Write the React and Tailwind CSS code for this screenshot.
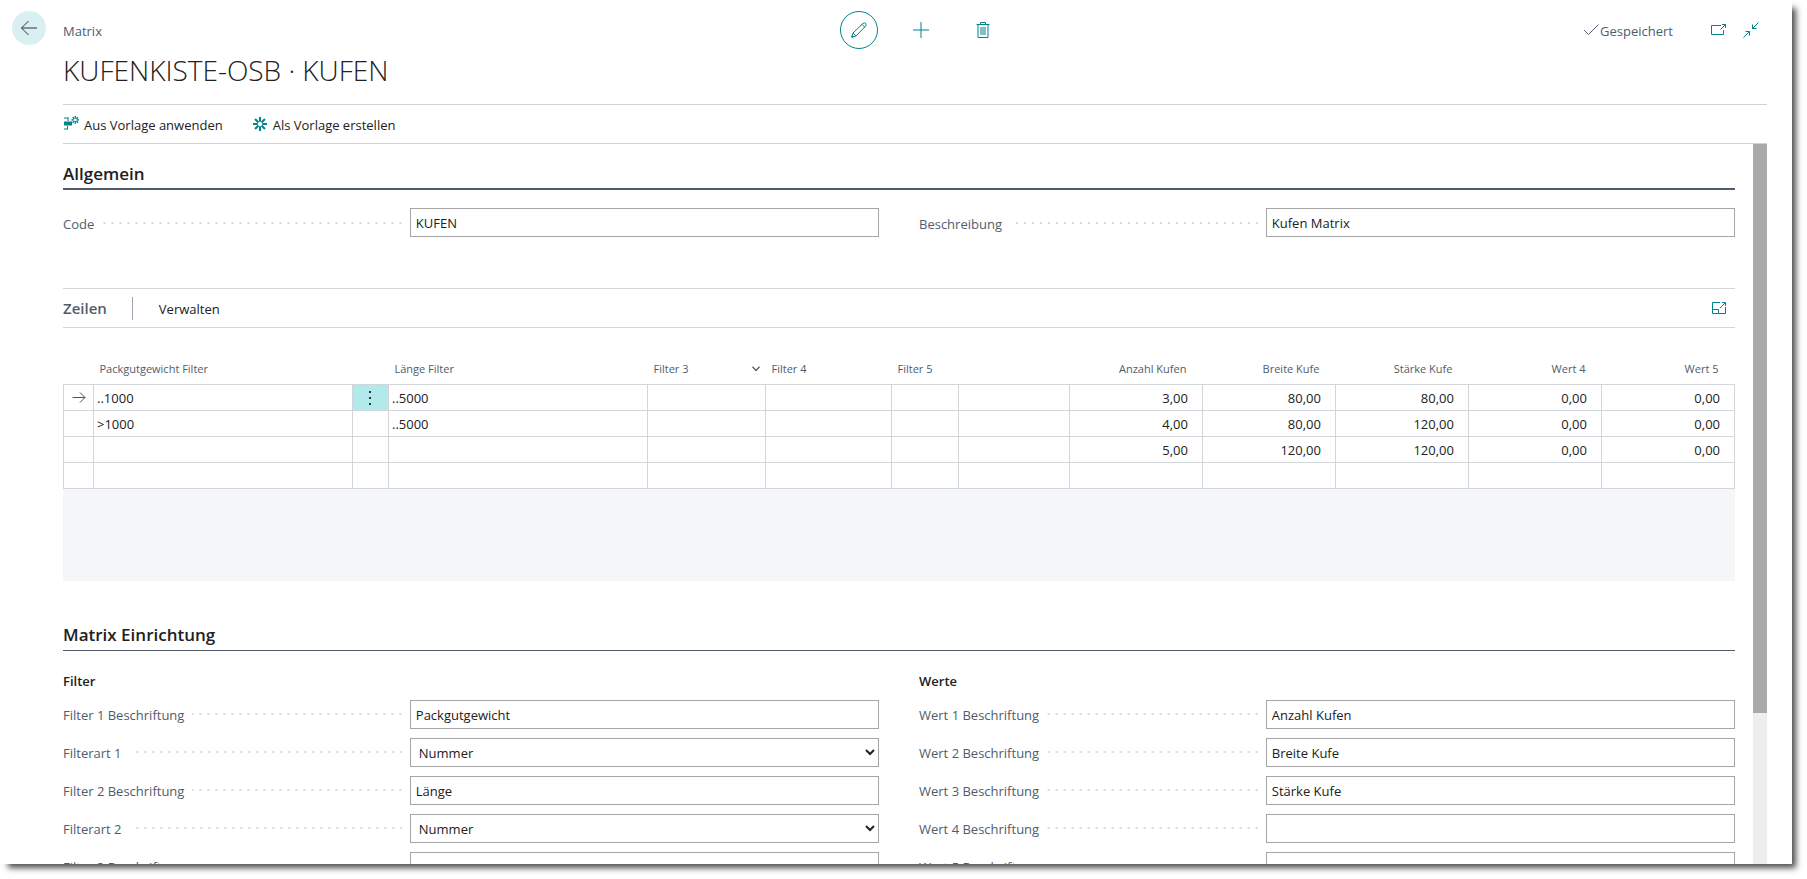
import { useId } from "react";

const TEAL = "#008489";

function Field({ label, value, options }) {
  const id = useId();
  const box =
    "h-[29px] w-[57.5%] shrink-0 rounded-none border border-[#a6a6a6] bg-white text-[13px] text-[#212121] outline-none";
  return (
    <div className="flex h-[29px] items-center">
      <label htmlFor={id} className="shrink-0 pt-[2px] text-[13px] leading-[20px] text-[#505c6d]">
        {label}
      </label>
      <span className="mx-2 h-[2px] flex-1 bg-[linear-gradient(270deg,#d8d8d8_2px,transparent_2px)] bg-[length:8px_2px] bg-right" />
      {options ? (
        <select id={id} defaultValue={value} className={box + " px-1 pt-px"}>
          {options.map((o) => (
            <option key={o}>{o}</option>
          ))}
        </select>
      ) : (
        <input id={id} type="text" defaultValue={value} className={box + " px-[5px] pt-px"} />
      )}
    </div>
  );
}

function Svg({ size = 16, children, color = TEAL }) {
  return (
    <svg
      width={size}
      height={size}
      viewBox={`0 0 ${size} ${size}`}
      fill="none"
      stroke={color}
      strokeWidth="1"
      aria-hidden="true"
    >
      {children}
    </svg>
  );
}

const Burst = ({ cx, cy, r, inner, w }) => (
  <g strokeWidth={w}>
    {[0, 45, 90, 135, 180, 225, 270, 315].map((a) => (
      <path key={a} d={`M${cx + inner} ${cy}H${cx + r}`} transform={`rotate(${a} ${cx} ${cy})`} />
    ))}
  </g>
);

const kinds = ["Nummer", "Text", "Datum"];

const leftFields = [
  { label: "Filter 1 Beschriftung", value: "Packgutgewicht" },
  { label: "Filterart 1", value: "Nummer", options: kinds },
  { label: "Filter 2 Beschriftung", value: "Länge" },
  { label: "Filterart 2", value: "Nummer", options: kinds },
  { label: "Filter 3 Beschriftung", value: "" },
];

const rightFields = [
  { label: "Wert 1 Beschriftung", value: "Anzahl Kufen" },
  { label: "Wert 2 Beschriftung", value: "Breite Kufe" },
  { label: "Wert 3 Beschriftung", value: "Stärke Kufe" },
  { label: "Wert 4 Beschriftung", value: "" },
  { label: "Wert 5 Beschriftung", value: "" },
];

const rows = [
  ["..1000", "..5000", "", "", "", "", "3,00", "80,00", "80,00", "0,00", "0,00"],
  [">1000", "..5000", "", "", "", "", "4,00", "80,00", "120,00", "0,00", "0,00"],
  ["", "", "", "", "", "", "5,00", "120,00", "120,00", "0,00", "0,00"],
  ["", "", "", "", "", "", "", "", "", "", ""],
];

const colWidths = [30, 259, 36, 259, 118, 126, 67, 111, 133, 133, 133, 133, 133];

function Lines() {
  const td = "h-[26px] border border-[#d2d5da] p-0";
  const text = td + " pt-[2px]";
  const th = "h-[31px] pt-[2px] pr-[5px] pl-[6px] font-normal whitespace-nowrap";
  return (
    <table className="w-full table-fixed border-collapse text-[13px] leading-[20px] text-[#212121]">
      <colgroup>
        {colWidths.map((w, i) => (
          <col key={i} style={{ width: `${(w / 1671) * 100}%` }} />
        ))}
      </colgroup>
      <thead>
        <tr className="text-left text-[11px] text-[#505c6d]">
          <td />
          <th className={th}>Packgutgewicht Filter</th>
          <td />
          <th className={th}>Länge Filter</th>
          <th className={th}>
            <span className="flex items-center justify-between">
              Filter 3
              <svg width="8" height="6" viewBox="0 0 8 6" fill="none" stroke="#505c6d" strokeWidth="1.3" aria-hidden="true">
                <path d="M.5 .8L4 4.5L7.5 .8" />
              </svg>
            </span>
          </th>
          <th className={th}>Filter 4</th>
          <th className={th}>Filter 5</th>
          <td />
          {["Anzahl Kufen", "Breite Kufe", "Stärke Kufe", "Wert 4", "Wert 5"].map((h) => (
            <th key={h} className="h-[31px] pt-[2px] pr-4 text-right font-normal whitespace-nowrap">
              {h}
            </th>
          ))}
        </tr>
      </thead>
      <tbody>
        {rows.map((r, i) => (
          <tr key={i}>
            <td className={td}>
              {i === 0 && (
                <svg className="mx-auto" width="14" height="12" viewBox="0 0 14 12" fill="none" stroke="#505050" strokeWidth="1" aria-hidden="true">
                  <path d="M.5 6.5H13M8 1.5L13 6.5L8 11.5" />
                </svg>
              )}
            </td>
            <td className={text + " pl-[3px]"}>{r[0]}</td>
            <td className={i === 0 ? td + " bg-[#b2eaec]" : td}>
              {i === 0 && (
                <button type="button" aria-label="Weitere Optionen" className="flex w-full items-center justify-center pt-px">
                  <svg width="2" height="14" viewBox="0 0 2 14" fill="#333333" aria-hidden="true">
                    <path d="M0 0h2v2H0zM0 6h2v2H0zM0 12h2v2H0z" />
                  </svg>
                </button>
              )}
            </td>
            {r.slice(1, 6).map((c, k) => (
              <td key={k} className={text + " pl-[3px]"}>
                {c}
              </td>
            ))}
            {r.slice(6).map((c, k) => (
              <td key={k} className={text + " pr-[14px] text-right"}>
                {c}
              </td>
            ))}
          </tr>
        ))}
      </tbody>
    </table>
  );
}

export default function App() {
  return (
    <div className="h-screen overflow-hidden bg-white pr-[15px] pb-[15px] font-['Open_Sans','Noto_Sans',sans-serif] text-[#212121]">
      <div className="flex h-full flex-col bg-white shadow-[6px_6px_6px_-2px_#505050]">
        <header className="flex h-[105px] shrink-0 pr-[25px] pl-3">
          <a
            href="#zurueck"
            aria-label="Zurück"
            className="mt-[11px] flex size-[34px] shrink-0 items-center justify-center rounded-full bg-[#d8f0f2]"
          >
            <Svg color="#333333">
              <path d="M.5 8H16M7.5 1L.5 8L7.5 15" />
            </Svg>
          </a>
          <div className="ml-[17px] flex flex-1 flex-col border-b border-[#d2d2d6]">
            <div className="mt-[11px] grid h-[38px] grid-cols-[1fr_auto_1fr] items-center">
              <span className="pt-[2px] text-[13px] leading-[20px] text-[#505c6d]">Matrix</span>
              <div className="flex items-center gap-6 pl-3">
                <button
                  type="button"
                  aria-label="Bearbeiten"
                  className="flex size-[38px] items-center justify-center rounded-full border border-[#008489]"
                >
                  <Svg>
                    <path
                      d="M.8 15.2L2 11L12 1.4Q13.3.3 14.7 1.4Q15.8 2.8 14.6 4.1L5 14L.8 15.2ZM2 11L5 14M11 2.4L13.7 5.1M.8 15.2L2.6 14.6L1.4 13.4Z"
                    />
                  </Svg>
                </button>
                <button type="button" aria-label="Neu" className="flex size-[38px] items-center justify-center">
                  <Svg>
                    <path d="M8 0V16M0 8H16" />
                  </Svg>
                </button>
                <button type="button" aria-label="Löschen" className="flex size-[38px] items-center justify-center">
                  <Svg>
                    <path d="M1.5 2.5H14.5M5.5 2.5V.5H10.5V2.5M3 2.5V15.5H13V2.5M6 5V13M8 5V13M10 5V13" />
                  </Svg>
                </button>
              </div>
              <div className="flex items-center justify-end">
                <Svg color="#505c6d">
                  <path d="M1 8L5.5 12.5L15.5 2.5" />
                </Svg>
                <span className="ml-px pt-[2px] text-[13px] leading-[20px] text-[#505c6d]">Gespeichert</span>
                <button type="button" aria-label="In neuem Fenster öffnen" className="ml-[38px]">
                  <Svg>
                    <path d="M10 3.5H.5V12.5H12.5V8M9.5 7.5L14.5 2.5M11 2.5H14.5V6" />
                  </Svg>
                </button>
                <button type="button" aria-label="Verkleinern" className="mr-2 ml-4">
                  <Svg>
                    <path d="M15.5 .5L9.5 6.5M9.5 2.5V6.5H13.5M.5 15.5L6.5 9.5M2.5 9.5H6.5V13.5" />
                  </Svg>
                </button>
              </div>
            </div>
            <h1 className="text-[28px] leading-[43px] font-light">KUFENKISTE-OSB · KUFEN</h1>
          </div>
        </header>

        <div className="flex min-h-0 flex-1 flex-col pr-[25px] pl-[63px]">
          <nav className="flex h-[39px] shrink-0 items-center gap-[29px] border-b border-[#d2d2d6] text-[13px] leading-[20px]">
            <button type="button" className="flex items-center gap-[5px]">
              <Svg>
                <path d="M1 2H5.5M5 1.5V5M1 13H4.5M4.5 13.5V10" />
                <path d="M1 5.5H9V9.5H1Z" fill={TEAL} stroke="none" />
                <Burst cx={12.3} cy={3.9} r={3.9} inner={1.4} w={1.4} />
              </Svg>
              <span className="pt-[2px]">Aus Vorlage anwenden</span>
            </button>
            <button type="button" className="flex items-center gap-[5px]">
              <Svg>
                <Burst cx={8} cy={8} r={7} inner={2.2} w={2} />
              </Svg>
              <span className="pt-[2px]">Als Vorlage erstellen</span>
            </button>
          </nav>

          <div className="flex min-h-0 flex-1">
            <main className="min-w-0 flex-1 overflow-hidden">
              <section>
                <h2 className="h-[46px] border-b-2 border-[#505c6d] pt-4 text-[17px] leading-[28px] font-semibold">Allgemein</h2>
                <div className="grid grid-cols-2 gap-x-10 pt-[18px]">
                  <Field label="Code" value="KUFEN" />
                  <Field label="Beschreibung" value="Kufen Matrix" />
                </div>
              </section>

              <section className="mt-[51px]">
                <div className="flex h-[40px] items-center border-y border-[#d2d5da]">
                  <h2 className="text-[15px] font-semibold text-[#505c6d]">Zeilen</h2>
                  <span className="mr-[26px] ml-[25px] h-[23px] border-l border-[#a0a7b2]" />
                  <button type="button" className="pt-[2px] text-[13px] leading-[20px]">
                    Verwalten
                  </button>
                  <button type="button" aria-label="Maximieren" className="mr-2 ml-auto">
                    <Svg>
                      <path d="M9 2.5H1.5V13.5H14.5V7M1.5 9.5H7.5V13.5M9 8L14 3M11 2.5H14.5V6" />
                    </Svg>
                  </button>
                </div>
                <div className="pt-[25px]">
                  <Lines />
                  <div className="h-[92px] bg-[#f5f6f8]" />
                </div>
              </section>

              <section className="pt-[38px]">
                <h2 className="h-[32px] border-b border-[#505c6d] text-[17px] leading-[32px] font-semibold">Matrix Einrichtung</h2>
                <div className="grid grid-cols-2 gap-x-10 pt-5">
                  {[
                    ["Filter", leftFields],
                    ["Werte", rightFields],
                  ].map(([title, fields]) => (
                    <div key={title} className="flex flex-col gap-[9px]">
                      <h3 className="text-[13px] leading-[20px] font-semibold">{title}</h3>
                      {fields.map((f) => (
                        <Field key={f.label} {...f} />
                      ))}
                    </div>
                  ))}
                </div>
              </section>
            </main>
            <div className="ml-[18px] w-[14px] shrink-0 bg-[#eeeeee]">
              <div className="h-[79%] bg-[#a9a9a9]" />
            </div>
          </div>
        </div>
      </div>
    </div>
  );
}
